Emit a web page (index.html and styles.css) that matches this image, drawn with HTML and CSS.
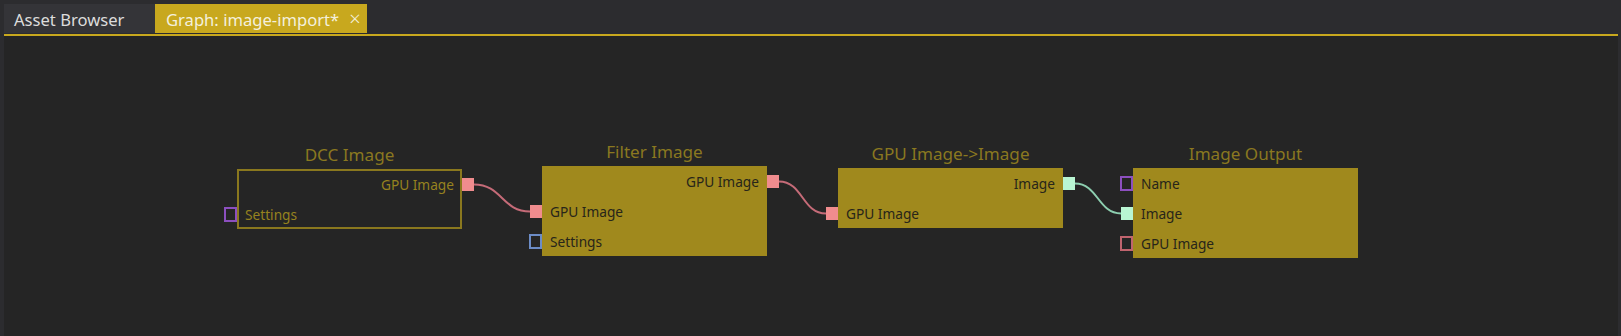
FILE: index.html
```html
<!DOCTYPE html>
<html lang="en">
<head>
  <meta charset="UTF-8" />
  <title>Graph: image-import</title>
  <link rel="stylesheet" href="styles.css">
</head>
<body>
  <div class="tab-bar">
    <div class="tab">Asset Browser</div>
    <div class="tab active">Graph: image-import*<span class="close">×</span></div>
  </div>
  <div class="tab-line"></div>

  <div class="canvas">
    <svg class="wires" width="1614" height="300">
      <path class="wire gpu" d="M470 148.5 C498 148.5, 498 175.5, 526 175.5" />
      <path class="wire gpu" d="M775 145.5 C799 145.5, 798 177.5, 822 177.5" />
      <path class="wire img" d="M1071 147.5 C1094 147.5, 1094 177.5, 1117 177.5" />
    </svg>

    <div class="node" style="left:233px; top:133px;">
      <div class="node-title">DCC Image</div>
      <div class="node-body outline">
        <div class="row out">GPU Image<span class="port fill-gpu"></span></div>
        <div class="row in"><span class="port ring-purple"></span>Settings</div>
      </div>
    </div>

    <div class="node" style="left:538px; top:130px;">
      <div class="node-title">Filter Image</div>
      <div class="node-body">
        <div class="row out">GPU Image<span class="port fill-gpu"></span></div>
        <div class="row in"><span class="port fill-gpu"></span>GPU Image</div>
        <div class="row in"><span class="port ring-blue"></span>Settings</div>
      </div>
    </div>

    <div class="node" style="left:834px; top:132px;">
      <div class="node-title">GPU Image-&gt;Image</div>
      <div class="node-body">
        <div class="row out">Image<span class="port fill-img"></span></div>
        <div class="row in"><span class="port fill-gpu"></span>GPU Image</div>
      </div>
    </div>

    <div class="node" style="left:1129px; top:132px;">
      <div class="node-title">Image Output</div>
      <div class="node-body">
        <div class="row in"><span class="port ring-purple"></span>Name</div>
        <div class="row in"><span class="port fill-img"></span>Image</div>
        <div class="row in"><span class="port ring-pink"></span>GPU Image</div>
      </div>
    </div>
  </div>
</body>
</html>
```

FILE: styles.css
```css
* {
  box-sizing: border-box;
}

body {
  margin: 0;
  background: #2c2c2f;
  font-family: 'Noto Sans', 'Open Sans', sans-serif;
  height: 336px;
  overflow: hidden;
  display: flex;
  flex-direction: column;
}

.tab-bar {
  display: flex;
  padding: 4px 0 0 4px;
  height: 34px;
}

.tab {
  flex-shrink: 0;
  white-space: nowrap;
  height: 29px;
  padding: 1px 10px 0;
  display: flex;
  align-items: center;
  font-size: 16.6px;
  color: #dcdcdc;
  background: #343438;
  width: 151px;
}

.tab.active {
  background: #c8a81e;
  color: #f4f0dc;
  width: 212px;
  padding-left: 11px;
}

.close {
  margin-left: 10px;
  font-size: 20px;
  font-weight: 300;
  line-height: 1;
}

.tab-line {
  height: 2px;
  margin: 0 3px 0 4px;
  background: #c8a81e;
}

.canvas {
  position: relative;
  flex: 1;
  margin: 0 3px 0 4px;
  background: #252525;
}

.wires {
  position: absolute;
  left: 0;
  top: 0;
}

.wire {
  fill: none;
  stroke-width: 2;
}

.wire.gpu {
  stroke: #c56b78;
}

.wire.img {
  stroke: #8dcfb0;
}

.node {
  position: absolute;
  width: 225px;
  margin-top: -25px;
}

.node-title {
  text-align: center;
  font-size: 17.1px;
  line-height: 22px;
  margin-bottom: 3px;
  color: #8a7820;
}

.node-body {
  background: #a0891d;
  color: #27251a;
}

.node-body.outline {
  background: transparent;
  box-shadow: inset 0 0 0 2px #8a781e;
  color: #96821f;
}

.row {
  position: relative;
  height: 30px;
  line-height: 30px;
  font-size: 13.7px;
  padding: 1px 8px 0;
}

.row.out {
  text-align: right;
}

.port {
  position: absolute;
  top: 9px;
  width: 12px;
  height: 13px;
}

.row.in .port {
  left: -12px;
}

.row.out .port {
  right: -12px;
}

.fill-gpu {
  background: #f08c8e;
}

.fill-img {
  background: #b9f6d3;
}

.ring-purple,
.ring-blue,
.ring-pink {
  top: 8px;
  width: 13px;
  height: 15px;
}

.row.in .ring-purple,
.row.in .ring-blue,
.row.in .ring-pink {
  left: -13px;
}

.ring-purple {
  border: 2px solid #8c4fbf;
}

.ring-blue {
  border: 2px solid #6c8cc6;
}

.ring-pink {
  border: 2px solid #c0646e;
}
```
